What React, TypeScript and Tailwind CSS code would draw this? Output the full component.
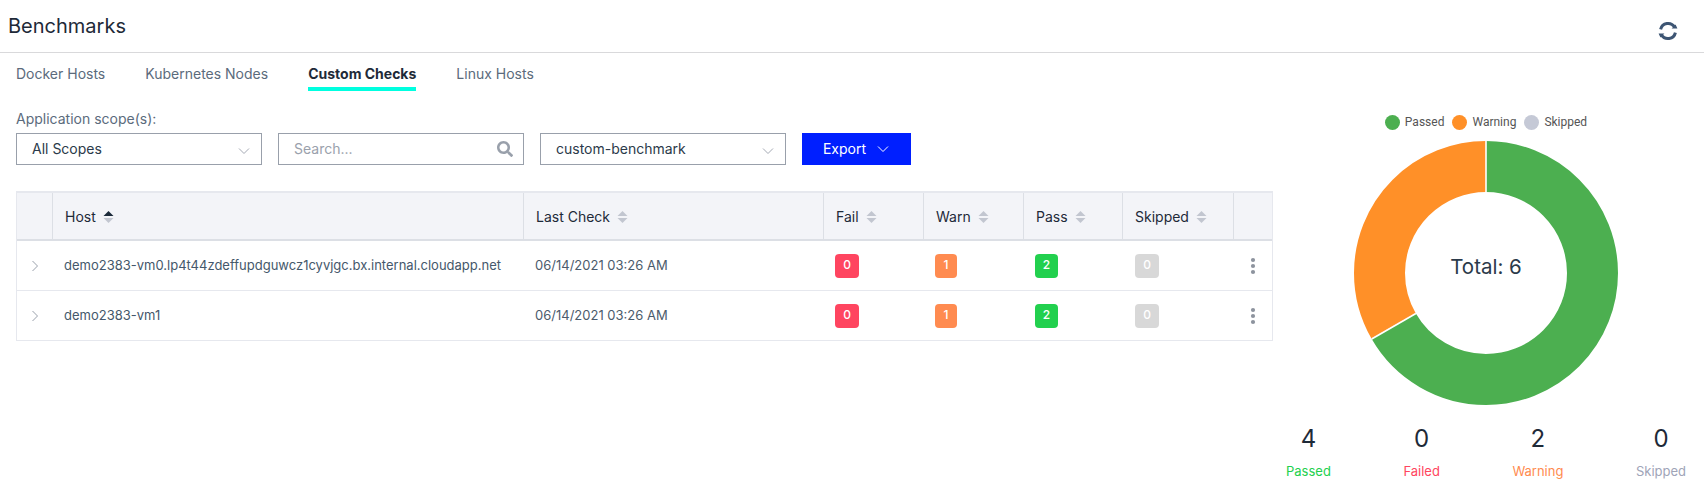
import React from "react";
import { FaSearch } from "react-icons/fa";

const Sort = ({ active = false }: { active?: boolean }) => (
  <svg width="11" height="14" viewBox="0 0 11 14" className="ml-[7px] shrink-0">
    <path d="M5.5 1 L10.5 6 L0.5 6 Z" fill={active ? "#1b2a3a" : "#c2c6d0"} />
    <path d="M5.5 13 L10.5 8 L0.5 8 Z" fill="#c2c6d0" />
  </svg>
);

const Chevron = ({ color = "#a4a9b4", size = 12 }: { color?: string; size?: number }) => (
  <svg width={size} height={size} viewBox="0 0 12 12" fill="none" stroke={color} strokeWidth="1">
    <path d="M1 3.5 L6 8.5 L11 3.5" />
  </svg>
);

const Select = ({ value }: { value: string }) => (
  <div className="flex h-8 w-[246px] items-center justify-between border border-[#99a0ab] pl-[15px] pr-[11px] text-sm text-[#2b3a4a]">
    <span>{value}</span>
    <span className="mt-[3px]"><Chevron /></span>
  </div>
);

const Badge = ({ n, color, w }: { n: number; color: string; w: string }) => (
  <span className={`flex h-6 items-center justify-center rounded pb-[2px] text-xs font-medium text-white ${color} ${w}`}>{n}</span>
);

const Th = ({ label, w, active, last }: { label?: string; w: string; active?: boolean; last?: boolean }) => (
  <div className={`flex h-full items-center pl-3 pt-[2px] text-sm text-[#1e2a38] ${w} ${last ? "" : "border-r border-[#dcdfe5]"}`}>
    {label && <span>{label}</span>}
    {label && <Sort active={active} />}
  </div>
);

const Row = ({ host }: { host: string }) => (
  <div className="flex h-[50px] items-center border-b border-[#e6e8ee] text-[13px] text-[#4b5b6c]">
    <div className="flex w-[35px] justify-center">
      <svg width="8" height="12" viewBox="0 0 8 12" fill="none" stroke="#9aa1ac" strokeWidth="1"><path d="M1.5 1 L6.5 6 L1.5 11" /></svg>
    </div>
    <div className="w-[471px] pl-3 text-[#45586b]">{host}</div>
    <div className="w-[301px] pl-3">06/14/2021 03:26 AM</div>
    <div className="w-[100px] pl-[11px]"><Badge n={0} color="bg-[#ff4560]" w="w-6" /></div>
    <div className="w-[100px] pl-[11px]"><Badge n={1} color="bg-[#ff8b50]" w="w-[22px]" /></div>
    <div className="w-[100px] pl-[11px]"><Badge n={2} color="bg-[#22d04e]" w="w-[23px]" /></div>
    <div className="w-[110px] pl-[11px]"><Badge n={0} color="bg-[#d8d8d8]" w="w-6" /></div>
    <div className="flex flex-1 justify-center">
      <svg width="6" height="18" viewBox="0 0 6 18" fill="#8d939e"><circle cx="3" cy="3" r="2.1" /><circle cx="3" cy="9" r="2.1" /><circle cx="3" cy="15" r="2.1" /></svg>
    </div>
  </div>
);

const Legend = ({ color, label }: { color: string; label: string }) => (
  <div className="flex items-center gap-[5px]">
    <span className={`h-[15px] w-[15px] rounded-full ${color}`} />
    <span>{label}</span>
  </div>
);

const Stat = ({ n, label, color }: { n: number; label: string; color: string }) => (
  <div className="flex flex-col items-center">
    <span className="text-2xl leading-8 text-[#1e2a38]">{n}</span>
    <span className={`mt-[6px] text-[13px] leading-5 ${color}`}>{label}</span>
  </div>
);

export default function App() {
  return (
    <div className="h-[493px] w-[1704px] overflow-hidden bg-white font-['Inter',sans-serif]">
      <header className="flex h-[53px] items-center justify-between border-b border-[#d9d9db] pl-2 pr-[26px]">
        <h1 className="text-xl text-[#1e2a38]">Benchmarks</h1>
        <svg width="20" height="20" viewBox="0 0 20 20" fill="none" className="mt-[10px]">
          <path d="M2.6 8.4 A7.6 7.6 0 0 1 16.6 6.2" stroke="#3d5573" strokeWidth="3" />
          <path d="M17.4 11.6 A7.6 7.6 0 0 1 3.4 13.8" stroke="#3d5573" strokeWidth="3" />
          <path d="M13.6 7.4 L19.4 7.4 L17.6 3.6 Z" fill="#3d5573" />
          <path d="M6.4 12.6 L0.6 12.6 L2.4 16.4 Z" fill="#3d5573" />
        </svg>
      </header>
      <div className="flex">
        <main className="w-[1273px] shrink-0">
          <nav className="flex h-[38px] gap-10 pl-4 text-sm text-[#5b6b7c]">
            <a className="pt-[11px]">Docker Hosts</a>
            <a className="pt-[11px]">Kubernetes Nodes</a>
            <a className="border-b-4 border-[#00ffe0] pt-[11px] font-bold text-[#1e2a38]">Custom Checks</a>
            <a className="pt-[11px]">Linux Hosts</a>
          </nav>
          <div className="pl-4">
            <label className="mt-[18px] block text-sm leading-5 text-[#5b6b7c]">Application scope(s):</label>
            <div className="mt-1 flex gap-4">
              <Select value="All Scopes" />
              <div className="flex h-8 w-[246px] items-center justify-between border border-[#99a0ab] pl-[15px] pr-[10px] text-sm text-[#9aa1ac]">
                <span>Search...</span>
                <FaSearch size={16} color="#99a0ab" />
              </div>
              <Select value="custom-benchmark" />
              <button className="flex h-8 w-[109px] items-center justify-center gap-[11px] bg-[#001fff] pr-px text-sm text-white">
                Export <Chevron color="#ffffff" />
              </button>
            </div>
            <div className="mt-[26px] border border-t-2 border-[#e6e8ee] border-b-0">
              <div className="flex h-[48px] items-center border-b-2 border-[#dcdfe5] bg-[#f3f4f8]">
                <Th w="w-9" />
                <Th w="w-[471px]" label="Host" active />
                <Th w="w-[300px]" label="Last Check" />
                <Th w="w-[100px]" label="Fail" />
                <Th w="w-[100px]" label="Warn" />
                <Th w="w-[99px]" label="Pass" />
                <Th w="w-[111px]" label="Skipped" />
                <div className="flex-1" />
              </div>
              <Row host="demo2383-vm0.lp4t44zdeffupdguwcz1cyvjgc.bx.internal.cloudapp.net" />
              <Row host="demo2383-vm1" />
            </div>
          </div>
        </main>
        <aside className="flex w-[426px] shrink-0 flex-col items-center">
          <div className="mt-[61px] flex h-4 items-center gap-2 font-['Roboto',sans-serif] text-xs text-[#555]">
            <Legend color="bg-[#4caf50]" label="Passed" />
            <Legend color="bg-[#ff9028]" label="Warning" />
            <Legend color="bg-[#c5c9d6]" label="Skipped" />
          </div>
          <div className="relative mt-[11px] h-[264px] w-[264px]">
            <svg width="264" height="264" viewBox="0 0 264 264">
              <g fill="none" strokeWidth="51" transform="rotate(-90 132 132)">
                <circle cx="132" cy="132" r="106.5" stroke="#4caf50" strokeDasharray="446.06 669.16" />
                <circle cx="132" cy="132" r="106.5" stroke="#ff9028" strokeDasharray="223.03 669.16" strokeDashoffset="-446.06" />
              </g>
              <path d="M132 0 V51" stroke="#fff" strokeWidth="1.6" />
              <path d="M17.7 198 L61.9 172.5" stroke="#fff" strokeWidth="1.6" />
            </svg>
            <div className="absolute inset-0 top-[114px] text-center text-[20.5px] leading-6 text-[#2b3a4a]">Total: 6</div>
          </div>
          <div className="mt-[18px] flex w-[400px] justify-between">
            <Stat n={4} label="Passed" color="text-[#22d04e]" />
            <Stat n={0} label="Failed" color="text-[#ff4560]" />
            <Stat n={2} label="Warning" color="text-[#ff8b50]" />
            <Stat n={0} label="Skipped" color="text-[#a0a4b8]" />
          </div>
        </aside>
      </div>
    </div>
  );
}
